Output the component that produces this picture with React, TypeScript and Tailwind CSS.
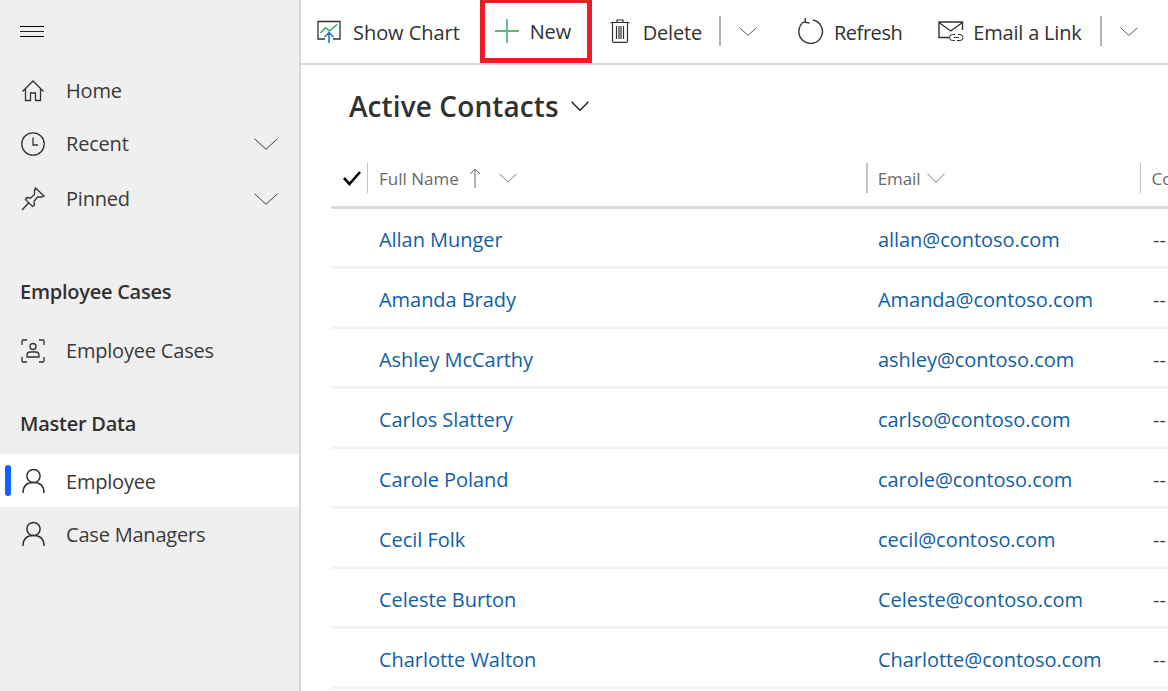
import React from "react";

const font = { fontFamily: '"Open Sans", "Noto Sans", sans-serif' };

function Chev({ w = 24, h = 12, color = "#3f3f3f", sw = 1 }: { w?: number; h?: number; color?: string; sw?: number }) {
  return (
    <svg width={w} height={h} viewBox={`0 0 ${w} ${h}`} fill="none" className="shrink-0">
      <path d={`M0.5 0.7 L${w / 2} ${h - 0.7} L${w - 0.5} 0.7`} stroke={color} strokeWidth={sw} />
    </svg>
  );
}

const stroke = { fill: "none", stroke: "#323130", strokeWidth: 1.3 };

const Home = () => (
  <svg width="24" height="24" viewBox="0 0 24 24" {...stroke}>
    <path d="M1.5 12.5 L12 2 L22.5 12.5 M4.5 10 V21.5 H9.5 V14 H14.5 V21.5 H19.5 V10" />
  </svg>
);
const Clock = () => (
  <svg width="24" height="24" viewBox="0 0 24 24" {...stroke}>
    <circle cx="12" cy="12" r="11.2" />
    <path d="M12 5.5 V13 H17" />
  </svg>
);
const Pin = () => (
  <svg width="24" height="24" viewBox="0 0 24 24" {...stroke}>
    <path d="M14.5 1 L23 9 L20.5 10 L16.5 10 L13 14.5 L13.5 18 L11.5 19.5 L4.5 12.5 L6 10.5 L9.5 11 L13.5 7.5 L13.5 3.5 Z M7.5 16 L1 23" />
  </svg>
);
const Cases = () => (
  <svg width="24" height="24" viewBox="0 0 24 24" {...stroke}>
    <path d="M1 6 V2 Q1 1 2 1 H6 M18 1 H22 Q23 1 23 2 V6 M1 18 V22 Q1 23 2 23 H6 M18 23 H22 Q23 23 23 22 V18" />
    <circle cx="12" cy="7.5" r="3" />
    <path d="M6 18 V16 Q6 13 9 13 H15 Q18 13 18 16 V18 Z" />
  </svg>
);
const Person = () => (
  <svg width="24" height="26" viewBox="0 0 24 26" fill="none" stroke="#323130" strokeWidth="1.5">
    <circle cx="12.5" cy="8" r="6.6" />
    <path d="M2 25 C2 18 6 14.5 12.5 14.5 C19 14.5 23 18 23 25" />
  </svg>
);
const ShowChart = () => (
  <svg width="24" height="24" viewBox="0 0 24 24" fill="none">
    <path d="M8 20 H1 V2.5 H23 V20 H16" stroke="#323130" strokeWidth="1.3" />
    <path d="M3.5 14 L8.5 8.5 L12.5 12 L20 5.5" stroke="#2fa866" strokeWidth="1.5" />
    <path d="M12 24 V13.5 M7.5 18 L12 13.5 L16.5 18" stroke="#1c6fb5" strokeWidth="1.5" />
  </svg>
);
const Plus = () => (
  <svg width="24" height="24" viewBox="0 0 24 24" fill="none" stroke="#5cb97c" strokeWidth="1.8">
    <path d="M12 0 V24 M0 12 H24" />
  </svg>
);
const Trash = () => (
  <svg width="20" height="24" viewBox="0 0 20 24" fill="none" stroke="#323130" strokeWidth="1.2">
    <path d="M0.5 3.5 H19.5 M7 3.5 V1 H13 V3.5 M2.5 3.5 V22 Q2.5 23.4 4 23.4 H16 Q17.5 23.4 17.5 22 V3.5 M6.5 7 V20 M9 7 V20 M11 7 V20 M13.5 7 V20" />
  </svg>
);
const Refresh = () => (
  <svg width="26" height="26" viewBox="0 0 26 26" fill="none" stroke="#323130" strokeWidth="1.4">
    <path d="M6.5 3.5 A11.8 11.8 0 1 0 15 2" />
    <path d="M7.5 0 L7 4.2 L11.5 5" />
  </svg>
);
const EmailLink = () => (
  <svg width="26" height="24" viewBox="0 0 26 24" fill="none" stroke="#323130" strokeWidth="1.4">
    <path d="M12 18.5 H1 V3 H24.5 V11 M1 3.5 L12.7 12 L24.5 3.5" />
    <path d="M18 14 H15.5 A3 3 0 0 0 15.5 20 H18 M17 17 H22 M21 14 H23 A3 3 0 0 1 23 20 H20" strokeWidth="1" transform="translate(-1 1.5)" />
  </svg>
);

const Divider = () => <div className="w-[2px] h-[30px] bg-[#b3b3b3] shrink-0" />;

function ToolItem({ icon, label, className = "", tracking = "tracking-[-0.1px]" }: { icon: React.ReactNode; label: string; className?: string; tracking?: string }) {
  return (
    <div className={`flex items-center h-full shrink-0 ${className}`}>
      {icon}
      <span className={`text-[20px] text-[#323130] pt-[3px] ${tracking}`}>{label}</span>
    </div>
  );
}

function NavItem({ icon, label, chevron, active, shift }: { icon: React.ReactNode; label: string; chevron?: boolean; active?: boolean; shift?: boolean }) {
  return (
    <div className={`relative flex items-center h-[53px] pl-[21px] pr-[21px] ${active ? "bg-white" : ""}`}>
      {active && <div className="absolute left-[5px] top-[11px] w-[6px] h-[31px] rounded-[3px] bg-[#0f62fe]" />}
      <div className="w-[24px] flex justify-center shrink-0">{icon}</div>
      <span className={`ml-[21px] text-[20px] text-[#3b3a39] tracking-[-0.2px] flex-1 ${shift ? "pt-[3px]" : ""}`}>{label}</span>
      {chevron && <Chev />}
    </div>
  );
}

const contacts = [
  ["Allan Munger", "allan@contoso.com"],
  ["Amanda Brady", "Amanda@contoso.com"],
  ["Ashley McCarthy", "ashley@contoso.com"],
  ["Carlos Slattery", "carlso@contoso.com"],
  ["Carole Poland", "carole@contoso.com"],
  ["Cecil Folk", "cecil@contoso.com"],
  ["Celeste Burton", "Celeste@contoso.com"],
  ["Charlotte Walton", "Charlotte@contoso.com"],
];

export default function App() {
  return (
    <div className="flex w-[1168px] h-[691px] overflow-hidden bg-white" style={font}>
      <aside className="w-[301px] shrink-0 h-full bg-[#efefef] border-r-2 border-[#d6d6d6]">
        <div className="h-[64px] pl-[20px] flex items-center pb-[1px]">
          <div className="w-[24px] h-[11px] border-y border-black flex items-center">
            <div className="w-full h-px bg-[#222]" />
          </div>
        </div>
        <NavItem icon={<Home />} label="Home" />
        <NavItem icon={<Clock />} label="Recent" chevron />
        <div className="h-[2px]" />
        <NavItem icon={<Pin />} label="Pinned" chevron />
        <div className="h-[40px]" />
        <div className="h-[54px] pl-[20px] flex items-center text-[20px] font-semibold text-[#323130] tracking-[-0.25px]">Employee Cases</div>
        <div className="h-[5px]" />
        <NavItem icon={<Cases />} label="Employee Cases" />
        <div className="h-[21px]" />
        <div className="h-[51px] pl-[20px] flex items-center text-[20px] font-semibold text-[#323130] tracking-[-0.25px]">Master Data</div>
        <div className="h-[5px]" />
        <NavItem icon={<Person />} label="Employee" active shift />
        <NavItem icon={<Person />} label="Case Managers" shift />
      </aside>

      <main className="flex-1 min-w-0 flex flex-col">
        <div className="h-[65px] shrink-0 border-b-2 border-[#d9d9d9] flex items-center pb-[1px] pl-[16px] overflow-hidden">
          <ToolItem icon={<ShowChart />} label="Show Chart" className="gap-[12px]" tracking="tracking-[-0.05px]" />
          <div className="ml-[20px] w-[112px] h-[65px] -mt-[1px] border-[5px] border-[#ed1c24] flex items-center pl-[10px] gap-[11px] shrink-0">
            <Plus />
            <span className="text-[20px] text-[#323130] tracking-[-0.2px] pt-[3px]">New</span>
          </div>
          <ToolItem icon={<Trash />} label="Delete" className="ml-[18px] gap-[13px]" tracking="tracking-[-0.2px]" />
          <div className="ml-[17px]"><Divider /></div>
          <div className="ml-[18px]"><Chev w={18} h={9} color="#3f5f7f" /></div>
          <ToolItem icon={<Refresh />} label="Refresh" className="ml-[41px] gap-[10px]" tracking="tracking-[-0.45px]" />
          <ToolItem icon={<EmailLink />} label="Email a Link" className="ml-[36px] gap-[9px]" tracking="tracking-[-0.2px]" />
          <div className="ml-[18px]"><Divider /></div>
          <div className="ml-[18px]"><Chev w={18} h={9} color="#3f5f7f" /></div>
        </div>

        <div className="h-[82px] shrink-0 pl-[48px] flex items-center gap-[12px]">
          <span className="text-[28px] font-semibold text-[#323130] tracking-[0.1px]">Active Contacts</span>
          <Chev w={18} h={10} color="#323130" sw={1.6} />
        </div>

        <div className="ml-[30px] shrink-0">
          <div className="h-[62px] border-b-[3px] border-[#dcdcdc] flex items-center pt-[3px]">
            <svg width="18" height="16" viewBox="0 0 18 16" fill="none" stroke="#000" strokeWidth="2.6" className="ml-[12px] shrink-0">
              <path d="M1 8 L6.5 14 L17 2" />
            </svg>
            <div className="ml-[6px] w-px h-[30px] bg-[#c4c4c4] shrink-0" />
            <span className="ml-[11px] text-[17px] text-[#6b6966] tracking-[0px] whitespace-nowrap pt-[2px]">Full Name</span>
            <svg width="12" height="20" viewBox="0 0 12 20" fill="none" stroke="#6b6966" strokeWidth="1" className="ml-[10px] shrink-0">
              <path d="M6 20 V1 M1 6 L6 1 L11 6" />
            </svg>
            <div className="ml-[18px]"><Chev w={18} h={10} color="#6b7f8f" /></div>
            <div className="ml-[349px] w-[2px] h-[30px] bg-[#c4c4c4] shrink-0" />
            <span className="ml-[10px] text-[17px] text-[#6b6966] tracking-[-0.1px] pt-[2px]">Email</span>
            <div className="ml-[7px]"><Chev w={18} h={10} color="#6b7f8f" /></div>
            <div className="ml-[195px] w-px h-[30px] bg-[#c4c4c4] shrink-0" />
            <span className="ml-[10px] text-[17px] text-[#6b6966] pt-[2px]">Co</span>
          </div>
          {contacts.map(([name, email]) => (
            <div key={email} className="h-[60px] border-b-[3px] border-[#f3f3f3] flex items-center text-[20px] text-[#1160a5] tracking-[-0.05px] pt-[4px]">
              <span className="ml-[48px] w-[499px] shrink-0">{name}</span>
              <span className="w-[275px] shrink-0">{email}</span>
              <span className="text-[#444]">--</span>
            </div>
          ))}
        </div>
      </main>
    </div>
  );
}
